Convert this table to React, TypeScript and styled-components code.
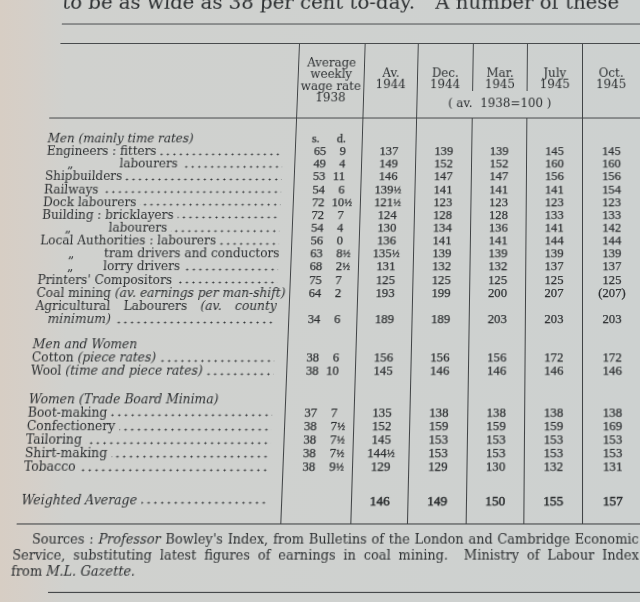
import React from "react";
import styled, { createGlobalStyle } from "styled-components";

const INK = "#2b2e30";
const LINE = "#3f4244";
const COLS = "253px 68px 55px 57px 56px 57px 59px";
const ROW = 13.15;

const Global = createGlobalStyle`
  html, body { margin: 0; padding: 0; background: #cfd2d0; }
  body { overflow: hidden; }
`;

const Viewport = styled.div`
  position: relative;
  width: 640px;
  height: 602px;
  overflow: hidden;
  background: linear-gradient(90deg, #d7cec4 0px, #d5cfc8 28px, #d0d1ce 66px, #cdd1d0 100%);
  font-family: "DejaVu Serif", "Liberation Serif", serif;
  color: ${INK};
`;

/* the printed page, photographed slightly tilted (bottom nearer the camera) */
const Sheet = styled.div`
  display: flex;
  flex-direction: column;
  width: 700px;
  transform-origin: 0 0;
  transform: matrix3d(1, 0, 0, 0, -0.077406, 0.9601, 0, -0.000133, 0, 0, 1, 0, 23.2218, 11.97, 0, 1.0399);
  filter: blur(0.25px);
`;

const Lead = styled.p`
  flex-shrink: 0;
  margin: -22px 0 0 41px;
  height: 24px;
  line-height: 24px;
  font-size: 20.5px;
  white-space: nowrap;
`;

const LeadGap = styled.span`
  margin-left: 21px;
`;

const Rule = styled.div<{ $left: number; $top?: number; $width: number }>`
  flex-shrink: 0;
  height: 1px;
  background: ${LINE};
  margin-left: ${(p) => p.$left}px;
  margin-top: ${(p) => p.$top ?? 0}px;
  width: ${(p) => p.$width}px;
`;

const Table = styled.div`
  flex-shrink: 0;
  display: flex;
  flex-direction: column;
  margin: 20px 0 0 36px;
  width: 624px;
`;

const Head = styled.div`
  display: grid;
  grid-template-columns: ${COLS};
  grid-template-rows: 49.5px 28.1px;
  font-size: 12.2px;
  line-height: 12.4px;
  text-align: center;
`;

const HeadBlank = styled.div`
  grid-column: 1;
  grid-row: 1 / 3;
`;

const HeadCell = styled.div<{ $col: string; $row: string; $end?: boolean; $pb?: number }>`
  grid-column: ${(p) => p.$col};
  grid-row: ${(p) => p.$row};
  border-left: 1px solid ${LINE};
  display: flex;
  flex-direction: column;
  align-items: center;
  justify-content: ${(p) => (p.$end ? "flex-end" : "center")};
  padding-bottom: ${(p) => p.$pb ?? 0}px;
  white-space: nowrap;
`;

const HeadLine = styled.span`
  display: block;
`;

const Row = styled.div<{ $h?: number }>`
  display: grid;
  grid-template-columns: ${COLS};
  height: ${(p) => p.$h ?? ROW}px;
  line-height: ${ROW}px;
  font-size: 12.2px;
`;

const Label = styled.div<{ $indent?: number }>`
  display: flex;
  align-items: center;
  min-width: 0;
  padding: 0 12px 0 ${(p) => p.$indent ?? 0}px;
  white-space: nowrap;
`;

const JustLabel = styled.div`
  padding-right: 12px;
  text-align: justify;
  text-align-last: justify;
  white-space: normal;
`;

const Ditto = styled.span<{ $w: number }>`
  display: inline-block;
  width: ${(p) => p.$w}px;
  flex-shrink: 0;
`;

/* dot leader, drawn as a row of printed dots ending at the column edge */
const Leader = styled.span`
  flex: 1;
  align-self: stretch;
  min-width: 0;
  margin-left: 4px;
  background-image: radial-gradient(circle at center, ${INK} 0.8px, transparent 1.15px);
  background-size: 6.6px 3px;
  background-repeat: repeat-x;
  background-position: right 2px bottom 2.6px;
`;

const It = styled.em`
  font-style: italic;
`;

const Cell = styled.div<{ $strong?: boolean }>`
  border-left: 1px solid ${LINE};
  display: flex;
  align-items: center;
  justify-content: center;
  font-family: "Liberation Serif", "DejaVu Serif", serif;
  font-size: ${(p) => (p.$strong ? 13 : 12.6)}px;
  color: ${(p) => (p.$strong ? "#232628" : INK)};
  -webkit-text-stroke: ${(p) => (p.$strong ? 0.45 : 0.25)}px ${INK};
  white-space: nowrap;
`;

const WageCell = styled(Cell)`
  justify-content: flex-start;
`;

const Sh = styled.span<{ $w?: number }>`
  display: inline-block;
  width: ${(p) => p.$w ?? 31}px;
  text-align: right;
`;

const Pn = styled.span<{ $w?: number }>`
  display: inline-block;
  width: ${(p) => p.$w ?? 20}px;
  text-align: right;
`;

const FracSlot = styled.span`
  display: inline-block;
  width: 0;
  overflow: visible;
  white-space: nowrap;
`;

const Frac = styled.span`
  font-size: 10px;
  margin-left: 0.5px;
`;

const Sources = styled.div`
  flex-shrink: 0;
  margin: 6.2px 0 0 31px;
  width: 606px;
  font-size: 12.5px;
  line-height: 15px;
`;

const SrcLine = styled.div<{ $indent?: number; $justify?: boolean }>`
  padding-left: ${(p) => p.$indent ?? 0}px;
  text-align: justify;
  text-align-last: ${(p) => (p.$justify ? "justify" : "left")};
`;

const num = (v: string) => {
  if (v.endsWith("½")) {
    return (
      <>
        {v.slice(0, -1)}
        <Frac>½</Frac>
      </>
    );
  }
  return v;
};

type Entry = {
  label: React.ReactNode;
  indent?: number;
  ditto?: number;
  leader?: boolean;
  justify?: boolean;
  sd?: boolean;
  s?: string;
  d?: string;
  vals?: string[];
  strong?: boolean;
};

const A: Entry[] = [
  { label: <It>Men (mainly time rates)</It>, sd: true },
  { label: "Engineers : fitters", leader: true, s: "65", d: "9", vals: ["137", "139", "139", "145", "145"] },
  { label: "labourers", indent: 22, ditto: 53, leader: true, s: "49", d: "4", vals: ["149", "152", "152", "160", "160"] },
  { label: "Shipbuilders", leader: true, s: "53", d: "11", vals: ["146", "147", "147", "156", "156"] },
  { label: "Railways", leader: true, s: "54", d: "6", vals: ["139½", "141", "141", "141", "154"] },
  { label: "Dock labourers", leader: true, s: "72", d: "10½", vals: ["121½", "123", "123", "123", "123"] },
  { label: "Building : bricklayers", leader: true, s: "72", d: "7", vals: ["124", "128", "128", "133", "133"] },
  { label: "labourers", indent: 24, ditto: 44, leader: true, s: "54", d: "4", vals: ["130", "134", "136", "141", "142"] },
  { label: "Local Authorities : labourers", leader: true, s: "56", d: "0", vals: ["136", "141", "141", "144", "144"] },
  { label: "tram drivers and conductors", indent: 29, ditto: 36, s: "63", d: "8½", vals: ["135½", "139", "139", "139", "139"] },
  { label: "lorry drivers", indent: 29, ditto: 36, leader: true, s: "68", d: "2½", vals: ["131", "132", "132", "137", "137"] },
  { label: "Printers' Compositors", leader: true, s: "75", d: "7", vals: ["125", "125", "125", "125", "125"] },
  {
    label: (
      <>
        Coal mining <It>(av. earnings per man-shift)</It>
      </>
    ),
    s: "64",
    d: "2",
    vals: ["193", "199", "200", "207", "(207)"],
  },
  {
    label: (
      <>
        Agricultural Labourers <It>(av. county</It>
      </>
    ),
    justify: true,
  },
  { label: <It>minimum)</It>, indent: 13, leader: true, s: "34", d: "6", vals: ["189", "189", "203", "203", "203"] },
];

const B: Entry[] = [
  { label: <It>Men and Women</It> },
  {
    label: (
      <>
        Cotton <It>(piece rates)</It>
      </>
    ),
    leader: true,
    s: "38",
    d: "6",
    vals: ["156", "156", "156", "172", "172"],
  },
  {
    label: (
      <>
        Wool <It>(time and piece rates)</It>
      </>
    ),
    leader: true,
    s: "38",
    d: "10",
    vals: ["145", "146", "146", "146", "146"],
  },
];

const C: Entry[] = [
  { label: <It>Women (Trade Board Minima)</It> },
  { label: "Boot-making", leader: true, s: "37", d: "7", vals: ["135", "138", "138", "138", "138"] },
  { label: "Confectionery", leader: true, s: "38", d: "7½", vals: ["152", "159", "159", "159", "169"] },
  { label: "Tailoring", leader: true, s: "38", d: "7½", vals: ["145", "153", "153", "153", "153"] },
  { label: "Shirt-making", leader: true, s: "38", d: "7½", vals: ["144½", "153", "153", "153", "153"] },
  { label: "Tobacco", leader: true, s: "38", d: "9½", vals: ["129", "129", "130", "132", "131"] },
];

const W: Entry[] = [
  { label: <It>Weighted Average</It>, leader: true, vals: ["146", "149", "150", "155", "157"], strong: true },
];

const Pence = ({ d }: { d: string }) => {
  if (d.endsWith("½")) {
    return (
      <>
        <Pn>{d.slice(0, -1)}</Pn>
        <FracSlot>
          <Frac>½</Frac>
        </FracSlot>
      </>
    );
  }
  return <Pn>{d}</Pn>;
};

const DataRow = ({ e }: { e: Entry }) => (
  <Row>
    {e.justify ? (
      <JustLabel>{e.label}</JustLabel>
    ) : (
      <Label $indent={e.indent}>
        {e.ditto !== undefined && <Ditto $w={e.ditto}>„</Ditto>}
        <span>{e.label}</span>
        {e.leader && <Leader />}
      </Label>
    )}
    <WageCell>
      {e.sd && (
        <>
          <Sh $w={24}>s.</Sh>
          <Pn $w={27}>d.</Pn>
        </>
      )}
      {e.s && (
        <>
          <Sh>{e.s}</Sh>
          <Pence d={e.d ?? ""} />
        </>
      )}
    </WageCell>
    {Array.from({ length: 5 }).map((_, i) => (
      <Cell key={i} $strong={e.strong}>
        {e.vals ? num(e.vals[i]) : null}
      </Cell>
    ))}
  </Row>
);

const GapRow = ({ h }: { h: number }) => (
  <Row $h={h}>
    <Label />
    {Array.from({ length: 6 }).map((_, i) => (
      <Cell key={i} />
    ))}
  </Row>
);

const Block = ({ rows }: { rows: Entry[] }) => (
  <>
    {rows.map((e, i) => (
      <DataRow key={i} e={e} />
    ))}
  </>
);

export default function App() {
  return (
    <>
      <Global />
      <Viewport>
        <Sheet>
          <Lead>
            to be as wide as 38 per cent to-day.
            <LeadGap>A number of these</LeadGap>
          </Lead>
          <Rule $left={42} $top={11} $width={618} />
          <Table>
            <Rule $left={6} $width={618} />
            <Head>
              <HeadBlank />
              <HeadCell $col="2" $row="1 / 3">
                <HeadLine>Average</HeadLine>
                <HeadLine>weekly</HeadLine>
                <HeadLine>wage rate</HeadLine>
                <HeadLine>1938</HeadLine>
              </HeadCell>
              <HeadCell $col="3" $row="1 / 3" $end $pb={28.1}>
                <HeadLine>Av.</HeadLine>
                <HeadLine>1944</HeadLine>
              </HeadCell>
              <HeadCell $col="4" $row="1" $end>
                <HeadLine>Dec.</HeadLine>
                <HeadLine>1944</HeadLine>
              </HeadCell>
              <HeadCell $col="5" $row="1" $end>
                <HeadLine>Mar.</HeadLine>
                <HeadLine>1945</HeadLine>
              </HeadCell>
              <HeadCell $col="6" $row="1" $end>
                <HeadLine>July</HeadLine>
                <HeadLine>1945</HeadLine>
              </HeadCell>
              <HeadCell $col="7" $row="1 / 3" $end $pb={28.1}>
                <HeadLine>Oct.</HeadLine>
                <HeadLine>1945</HeadLine>
              </HeadCell>
              <HeadCell $col="4 / 7" $row="2">
                <HeadLine>( av.&nbsp; 1938=100 )</HeadLine>
              </HeadCell>
            </Head>
            <Rule $left={0} $width={624} />
            <GapRow h={15.4} />
            <Block rows={A} />
            <GapRow h={11.8} />
            <Block rows={B} />
            <GapRow h={14.4} />
            <Block rows={C} />
            <GapRow h={18.2} />
            <Block rows={W} />
            <GapRow h={15.15} />
            <Rule $left={-3} $width={627} />
          </Table>
          <Sources>
            <SrcLine $indent={18} $justify>
              Sources : <It>Professor</It> Bowley's Index, from Bulletins of the London and Cambridge Economic
            </SrcLine>
            <SrcLine $justify>
              Service, substituting latest figures of earnings in coal mining.&nbsp; Ministry of Labour Index
            </SrcLine>
            <SrcLine>
              from <It>M.L. Gazette.</It>
            </SrcLine>
          </Sources>
          <Rule $left={68} $top={12.1} $width={592} />
        </Sheet>
      </Viewport>
    </>
  );
}
